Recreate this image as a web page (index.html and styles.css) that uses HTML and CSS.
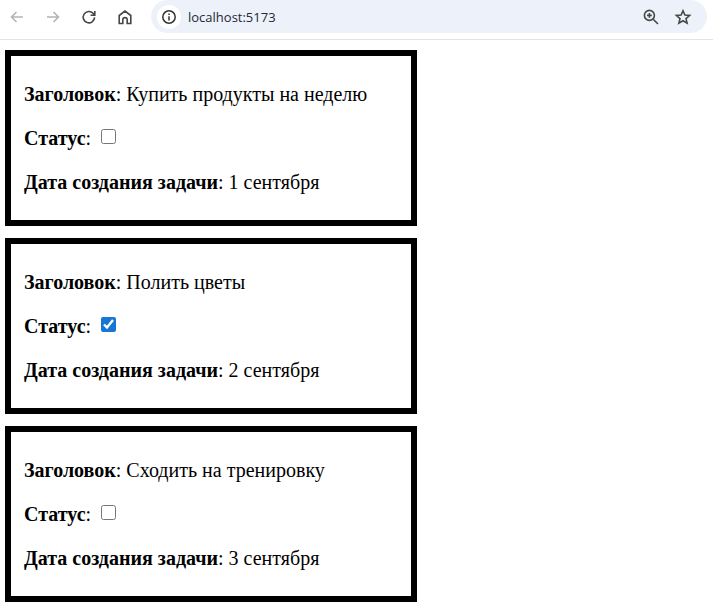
FILE: index.html
```html
<!DOCTYPE html>
<html lang="ru">
<head>
<meta charset="utf-8">
<title>localhost:5173</title>
<link rel="stylesheet" href="styles.css">
</head>
<body>
<header class="toolbar">
  <div class="nav">
    <svg class="icon muted" viewBox="0 0 18 18"><path d="M15 9H3.500M8.500 4 3.500 9l5 5"/></svg>
    <svg class="icon muted" viewBox="0 0 18 18"><path d="M3 9h11.500M9.500 4l5 5-5 5"/></svg>
    <svg class="icon" viewBox="0 0 18 18"><path d="M14.600 9.400a5.700 5.700 0 1 1-1.500-4.100L14.600 7M14.800 3v4.200h-4.200"/></svg>
    <svg class="icon" viewBox="0 0 18 18"><path d="M3.200 15.500V7.500L9 3l5.800 4.500v8h-3.600v-3.700a2.200 2.200 0 0 0-4.400 0v3.700z"/></svg>
  </div>
  <div class="omnibox">
    <span class="site-info">
      <svg class="info" viewBox="0 0 16 16"><circle cx="8" cy="8" r="6.200"/><path d="M8 7.200v4.200M8 4.500v1.400"/></svg>
    </span>
    <span class="url">localhost:5173</span>
    <svg class="icon zoom" viewBox="0 0 18 18"><circle cx="7.400" cy="7.400" r="5"/><path d="M11.200 11.200 16 16M5 7.400h4.800M7.400 5v4.800"/></svg>
    <svg class="icon star" viewBox="0 0 18 18"><path d="M9 2.800 10.900 7.100l4.700.4-3.600 3.100 1.100 4.600L9 12.800l-4.100 2.400 1.100-4.600-3.600-3.100 4.700-.4z"/></svg>
  </div>
</header>
<main class="list">
  <article class="task">
    <p><b>Заголовок</b>: Купить продукты на неделю</p>
    <p><b>Статус</b>: <input class="done" type="checkbox"></p>
    <p><b>Дата создания задачи</b>: 1 сентября</p>
  </article>
  <article class="task">
    <p><b>Заголовок</b>: Полить цветы</p>
    <p><b>Статус</b>: <input class="done" type="checkbox" checked></p>
    <p><b>Дата создания задачи</b>: 2 сентября</p>
  </article>
  <article class="task">
    <p><b>Заголовок</b>: Сходить на тренировку</p>
    <p><b>Статус</b>: <input class="done" type="checkbox"></p>
    <p><b>Дата создания задачи</b>: 3 сентября</p>
  </article>
</main>
</body>
</html>
```
FILE: styles.css
```css
html, body {
  margin: 0;
  padding: 0;
  background: #fff;
}
body {
  font-family: "Liberation Serif", "Times New Roman", serif;
  font-size: 20px;
  color: #000;
}
.toolbar {
  display: flex;
  height: 39px;
  border-bottom: 1px solid #e3e3e3;
}
.nav {
  display: flex;
  align-items: center;
  gap: 18px;
  width: 151px;
  height: 33px;
  padding-left: 8px;
  box-sizing: border-box;
}
.icon {
  width: 18px;
  height: 18px;
  flex: none;
  fill: none;
  stroke: #474747;
  stroke-width: 1.6;
}
.muted {
  stroke: #b4b4b4;
}
.omnibox {
  display: flex;
  align-items: center;
  width: 556px;
  height: 33px;
  padding-left: 6px;
  box-sizing: border-box;
  background: #edf2fa;
  border-radius: 17px;
}
.site-info {
  display: flex;
  align-items: center;
  justify-content: center;
  width: 24px;
  height: 24px;
  border-radius: 50%;
  background: #fff;
}
.info {
  width: 16px;
  height: 16px;
  fill: none;
  stroke: #333;
  stroke-width: 1.5;
}
.url {
  flex: 1;
  margin-left: 7px;
  font-family: "Open Sans", "Noto Sans", sans-serif;
  font-size: 13px;
  color: #1f2937;
}
.zoom {
  margin-right: 14px;
}
.star {
  margin-right: 15px;
}
.list {
  display: flex;
  flex-direction: column;
  gap: 12px;
  width: 412px;
  margin: 10px 0 0 5px;
}
.task {
  height: 176px;
  padding: 6px 12px 6px 13px;
  border: 6px solid #000;
  box-sizing: border-box;
  display: flex;
  flex-direction: column;
  justify-content: center;
  gap: 21px;
}
.task p {
  margin: 0;
  line-height: 23px;
}
.done {
  width: 15px;
  height: 15px;
  margin: 0 0 0 5px;
  vertical-align: 1px;
  accent-color: #1976d2;
}
```
